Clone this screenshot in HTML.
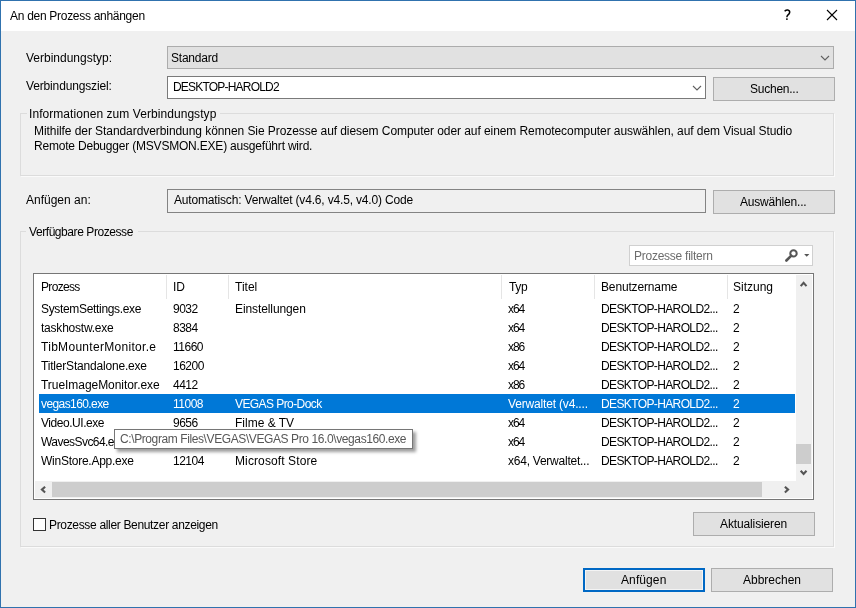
<!DOCTYPE html>
<html><head><meta charset="utf-8">
<style>
*{box-sizing:border-box;margin:0;padding:0}
html,body{width:856px;height:608px;overflow:hidden;background:#f0f0f0}
body{position:relative;font-family:"Liberation Sans",sans-serif;font-size:12px;line-height:15px;color:#000}
.a{position:absolute}
.t{position:absolute;white-space:pre;line-height:15px;font-size:12px;will-change:transform}
.win{left:0;top:0;width:856px;height:608px;border:1px solid #3072ae}
.title{left:1px;top:1px;width:854px;height:30px;background:#fff}
.grp{border:1px solid #dcdcdc;box-shadow:1px 1px 0 #fafafa}
.btn{background:#e1e1e1;border:1px solid #adadad}
.chev{position:absolute;width:8px;height:5px}
</style></head><body>
<div class="a win"></div>
<div class="a title"></div>
<div class="t" style="left:10px;top:9px;letter-spacing:-0.29px">An den Prozess anhängen</div>
<!-- help ? -->
<svg class="a" style="left:780px;top:6px" width="16" height="18" viewBox="0 0 16 18"><path d="M4.6 5.3Q6.3 3.7 8.1 4.1Q10.1 4.7 9.6 6.8Q9.2 8.1 7.8 9.1Q6.9 9.8 6.9 11.2" stroke="#000" stroke-width="1.5" fill="none"/><circle cx="6.9" cy="13.1" r="0.95" fill="#000"/></svg>
<svg class="a" style="left:826px;top:9px" width="12" height="12" viewBox="0 0 12 12"><path d="M1 1L11 11M11 1L1 11" stroke="#000" stroke-width="1.1" fill="none"/></svg>

<!-- row 1 -->
<div class="t" style="left:26px;top:51px">Verbindungstyp:</div>
<div class="a" style="left:167px;top:46px;width:667px;height:23px;background:#e1e1e1;border:1px solid #acacac"></div>
<div class="t" style="left:171px;top:51px;letter-spacing:-0.23px">Standard</div>
<svg class="a" style="left:820px;top:55px" width="10" height="6" viewBox="0 0 10 6"><path d="M1 1L5 5L9 1" stroke="#606060" stroke-width="1.1" fill="none"/></svg>

<!-- row 2 -->
<div class="t" style="left:26px;top:79px;letter-spacing:-0.15px">Verbindungsziel:</div>
<div class="a" style="left:167px;top:76px;width:539px;height:23px;background:#fff;border:1px solid #7a7a7a"></div>
<div class="t" style="left:173px;top:80px;letter-spacing:-0.8px">DESKTOP-HAROLD2</div>
<svg class="a" style="left:692px;top:84.6px" width="10" height="6" viewBox="0 0 10 6"><path d="M1 1L5 5L9 1" stroke="#606060" stroke-width="1.1" fill="none"/></svg>
<div class="a btn" style="left:713px;top:77px;width:122px;height:24px"></div>
<div class="t" style="left:750px;top:82px;letter-spacing:-0.24px">Suchen...</div>

<!-- info group -->
<div class="a grp" style="left:20px;top:113px;width:814px;height:63px"></div>
<div class="a" style="left:27px;top:106px;width:193px;height:14px;background:#f0f0f0"></div>
<div class="t" style="left:29px;top:107px;letter-spacing:0.06px">Informationen zum Verbindungstyp</div>
<div class="t" style="left:34px;top:124px;letter-spacing:-0.07px">Mithilfe der Standardverbindung können Sie Prozesse auf diesem Computer oder auf einem Remotecomputer auswählen, auf dem Visual Studio</div>
<div class="t" style="left:34px;top:139px;letter-spacing:-0.2px">Remote Debugger (MSVSMON.EXE) ausgeführt wird.</div>

<!-- anfuegen an -->
<div class="t" style="left:26px;top:193px">Anfügen an:</div>
<div class="a" style="left:167px;top:189px;width:539px;height:24px;background:#f0f0f0;border:1px solid #838383"></div>
<div class="t" style="left:174px;top:193px;letter-spacing:-0.17px">Automatisch: Verwaltet (v4.6, v4.5, v4.0) Code</div>
<div class="a btn" style="left:713px;top:190px;width:122px;height:24px"></div>
<div class="t" style="left:740px;top:195px;letter-spacing:-0.19px">Auswählen...</div>

<!-- processes group -->
<div class="a grp" style="left:20px;top:231px;width:814px;height:316px"></div>
<div class="a" style="left:26px;top:224px;width:112px;height:14px;background:#f0f0f0"></div>
<div class="t" style="left:29px;top:225px;letter-spacing:-0.43px">Verfügbare Prozesse</div>

<!-- filter -->
<div class="a" style="left:629px;top:245px;width:184px;height:21px;background:#fff;border:1px solid #d0d0d0"></div>
<div class="t" style="left:634px;top:249px;color:#6d6d6d;letter-spacing:-0.25px">Prozesse filtern</div>

<!-- listview -->
<div class="a" style="left:33px;top:273px;width:781px;height:227px;background:#fff;border:1px solid #767676"></div>

<!-- listview content -->
<div class="a" style="left:166px;top:275px;width:1px;height:24px;background:#e5e5e5"></div>
<div class="a" style="left:228px;top:275px;width:1px;height:24px;background:#e5e5e5"></div>
<div class="a" style="left:501px;top:275px;width:1px;height:24px;background:#e5e5e5"></div>
<div class="a" style="left:594px;top:275px;width:1px;height:24px;background:#e5e5e5"></div>
<div class="a" style="left:727px;top:275px;width:1px;height:24px;background:#e5e5e5"></div>
<div class="t" style="left:41px;top:280px;letter-spacing:-0.68px">Prozess</div>
<div class="t" style="left:173px;top:280px;letter-spacing:0px">ID</div>
<div class="t" style="left:235px;top:280px;letter-spacing:0px">Titel</div>
<div class="t" style="left:509px;top:280px;letter-spacing:-0.3px">Typ</div>
<div class="t" style="left:601px;top:280px;letter-spacing:-0.15px">Benutzername</div>
<div class="t" style="left:733px;top:280px;letter-spacing:0px">Sitzung</div>
<div class="a" style="left:39px;top:394px;width:756px;height:19px;background:#0078d7"></div>
<div class="t" style="left:41px;top:302px;letter-spacing:-0.33px">SystemSettings.exe</div>
<div class="t" style="left:173px;top:302px;letter-spacing:-0.5px">9032</div>
<div class="t" style="left:235px;top:302px;letter-spacing:-0.1px">Einstellungen</div>
<div class="t" style="left:508px;top:302px;letter-spacing:-1.05px">x64</div>
<div class="t" style="left:601px;top:302px;letter-spacing:-0.62px">DESKTOP-HAROLD2...</div>
<div class="t" style="left:733px;top:302px;letter-spacing:0px">2</div>
<div class="t" style="left:41px;top:321px;letter-spacing:-0.22px">taskhostw.exe</div>
<div class="t" style="left:173px;top:321px;letter-spacing:-0.5px">8384</div>
<div class="t" style="left:508px;top:321px;letter-spacing:-1.05px">x64</div>
<div class="t" style="left:601px;top:321px;letter-spacing:-0.62px">DESKTOP-HAROLD2...</div>
<div class="t" style="left:733px;top:321px;letter-spacing:0px">2</div>
<div class="t" style="left:41px;top:340px;letter-spacing:0.3px">TibMounterMonitor.e</div>
<div class="t" style="left:173px;top:340px;letter-spacing:-0.5px">11660</div>
<div class="t" style="left:508px;top:340px;letter-spacing:-1.05px">x86</div>
<div class="t" style="left:601px;top:340px;letter-spacing:-0.62px">DESKTOP-HAROLD2...</div>
<div class="t" style="left:733px;top:340px;letter-spacing:0px">2</div>
<div class="t" style="left:41px;top:359px;letter-spacing:-0.19px">TitlerStandalone.exe</div>
<div class="t" style="left:173px;top:359px;letter-spacing:-0.5px">16200</div>
<div class="t" style="left:508px;top:359px;letter-spacing:-1.05px">x64</div>
<div class="t" style="left:601px;top:359px;letter-spacing:-0.62px">DESKTOP-HAROLD2...</div>
<div class="t" style="left:733px;top:359px;letter-spacing:0px">2</div>
<div class="t" style="left:41px;top:378px;letter-spacing:-0.05px">TrueImageMonitor.exe</div>
<div class="t" style="left:173px;top:378px;letter-spacing:-0.5px">4412</div>
<div class="t" style="left:508px;top:378px;letter-spacing:-1.05px">x86</div>
<div class="t" style="left:601px;top:378px;letter-spacing:-0.62px">DESKTOP-HAROLD2...</div>
<div class="t" style="left:733px;top:378px;letter-spacing:0px">2</div>
<div class="t" style="left:41px;top:397px;color:#fff;letter-spacing:-0.59px">vegas160.exe</div>
<div class="t" style="left:173px;top:397px;color:#fff;letter-spacing:-0.5px">11008</div>
<div class="t" style="left:235px;top:397px;color:#fff;letter-spacing:-0.58px">VEGAS Pro-Dock</div>
<div class="t" style="left:508px;top:397px;color:#fff;letter-spacing:-0.17px">Verwaltet (v4....</div>
<div class="t" style="left:601px;top:397px;color:#fff;letter-spacing:-0.62px">DESKTOP-HAROLD2...</div>
<div class="t" style="left:733px;top:397px;color:#fff;letter-spacing:0px">2</div>
<div class="t" style="left:41px;top:416px;letter-spacing:-0.45px">Video.UI.exe</div>
<div class="t" style="left:173px;top:416px;letter-spacing:-0.5px">9656</div>
<div class="t" style="left:235px;top:416px;letter-spacing:0px">Filme &amp; TV</div>
<div class="t" style="left:508px;top:416px;letter-spacing:-1.05px">x64</div>
<div class="t" style="left:601px;top:416px;letter-spacing:-0.62px">DESKTOP-HAROLD2...</div>
<div class="t" style="left:733px;top:416px;letter-spacing:0px">2</div>
<div class="t" style="left:41px;top:435px;letter-spacing:-0.55px">WavesSvc64.exe</div>
<div class="t" style="left:508px;top:435px;letter-spacing:-1.05px">x64</div>
<div class="t" style="left:601px;top:435px;letter-spacing:-0.62px">DESKTOP-HAROLD2...</div>
<div class="t" style="left:733px;top:435px;letter-spacing:0px">2</div>
<div class="t" style="left:41px;top:454px;letter-spacing:-0.25px">WinStore.App.exe</div>
<div class="t" style="left:173px;top:454px;letter-spacing:-0.5px">12104</div>
<div class="t" style="left:235px;top:454px;letter-spacing:0.11px">Microsoft Store</div>
<div class="t" style="left:508px;top:454px;letter-spacing:-0.24px">x64, Verwaltet...</div>
<div class="t" style="left:601px;top:454px;letter-spacing:-0.62px">DESKTOP-HAROLD2...</div>
<div class="t" style="left:733px;top:454px;letter-spacing:0px">2</div>
<!-- scrollbars -->
<div class="a" style="left:796px;top:275px;width:16px;height:223px;background:#f0f0f0"></div>
<div class="a" style="left:796px;top:444px;width:15px;height:20px;background:#cdcdcd"></div>
<svg class="a" style="left:799px;top:280px" width="10" height="8" viewBox="0 0 10 8"><path d="M1.7 6.1L4.6 2.9L7.5 6.1" stroke="#555" stroke-width="2.1" fill="none"/></svg>
<svg class="a" style="left:799px;top:469px" width="10" height="8" viewBox="0 0 10 8"><path d="M1.7 1.7L4.6 4.9L7.5 1.7" stroke="#555" stroke-width="2.1" fill="none"/></svg>
<div class="a" style="left:35px;top:481px;width:777px;height:17px;background:#f0f0f0"></div>
<div class="a" style="left:52px;top:482px;width:710px;height:15px;background:#cdcdcd"></div>
<svg class="a" style="left:39px;top:485px" width="8" height="10" viewBox="0 0 8 10"><path d="M6.1 1.7L2.9 4.6L6.1 7.5" stroke="#555" stroke-width="2.1" fill="none"/></svg>
<svg class="a" style="left:783px;top:485px" width="8" height="10" viewBox="0 0 8 10"><path d="M1.9 1.7L5.1 4.6L1.9 7.5" stroke="#555" stroke-width="2.1" fill="none"/></svg>
<!-- tooltip -->
<div class="a" style="left:114px;top:429px;width:299px;height:20px;background:#fff;border:1px solid #767676;box-shadow:3px 3px 3px rgba(0,0,0,0.38)"></div>
<div class="t" style="left:120px;top:432px;color:#575757;letter-spacing:-0.40px">C:\Program Files\VEGAS\VEGAS Pro 16.0\vegas160.exe</div>
<!-- search icon -->
<svg class="a" style="left:784px;top:247px" width="28" height="16" viewBox="0 0 28 16"><circle cx="9.5" cy="6.4" r="3.2" stroke="#555" stroke-width="2" fill="none"/><path d="M7.3 8.6L2.4 13.5" stroke="#555" stroke-width="2.6" stroke-linecap="round"/><path d="M20.1 7L25.4 7L22.75 9.7Z" fill="#555"/></svg>
<!-- checkbox -->
<div class="a" style="left:33px;top:518px;width:13px;height:13px;background:#fff;border:1px solid #333"></div>
<div class="t" style="left:49px;top:518px;letter-spacing:-0.33px">Prozesse aller Benutzer anzeigen</div>
<div class="a btn" style="left:693px;top:512px;width:122px;height:24px"></div>
<div class="t" style="left:720px;top:517px;letter-spacing:-0.125px">Aktualisieren</div>

<!-- bottom buttons -->
<div class="a btn" style="left:583px;top:568px;width:122px;height:24px;border:2px solid #0068c4;box-shadow:inset 0 0 0 1px #f4f4f4"></div>
<div class="t" style="left:621px;top:573px;letter-spacing:0.1px">Anfügen</div>
<div class="a btn" style="left:711px;top:568px;width:122px;height:24px"></div>
<div class="t" style="left:743px;top:573px">Abbrechen</div>
</body></html>
